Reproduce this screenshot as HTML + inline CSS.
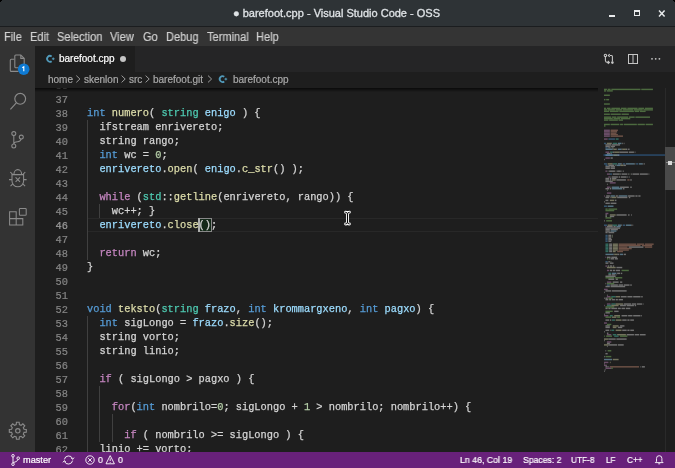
<!DOCTYPE html><html><head><meta charset="utf-8"><style>
*{margin:0;padding:0;box-sizing:border-box}
html,body{width:675px;height:468px;overflow:hidden;background:#1e1e1e}
body{position:relative;font-family:"Liberation Sans",sans-serif}
.t,.code,.ln{will-change:transform}
.t{-webkit-text-stroke:0.2px currentColor}
.a{position:absolute}
.t{position:absolute;white-space:pre;line-height:1}
.code{position:absolute;white-space:pre;font-family:"Liberation Mono",monospace;font-size:10.333px;line-height:14px;height:14px;-webkit-text-stroke:0.25px currentColor}
.ln{position:absolute;white-space:pre;font-family:"Liberation Mono",monospace;font-size:10.333px;line-height:14px;color:#858585;text-align:right;width:40px;-webkit-text-stroke:0.2px currentColor}
svg{position:absolute;overflow:visible}
</style></head><body>

<div class="a" style="left:0;top:0;width:675px;height:26px;background:#2e3336"></div>
<div class="a" style="left:0;top:26px;width:675px;height:1px;background:#1b1d1f"></div>
<div class="a" style="left:0;top:0;width:2px;height:1px;background:#000"></div><div class="a" style="left:0;top:0;width:1px;height:2px;background:#000"></div>
<div class="a" style="left:673px;top:0;width:2px;height:1px;background:#000"></div><div class="a" style="left:674px;top:0;width:1px;height:2px;background:#000"></div>
<div class="t" style="left:233px;top:8px;font-size:11px;color:#dfe3e6;-webkit-text-stroke:0.3px #dfe3e6">● barefoot.cpp - Visual Studio Code - OSS</div>
<div class="a" style="left:608.7px;top:14.6px;width:6.2px;height:2px;background:#e8eaeb"></div>
<div class="a" style="left:633.5px;top:10px;width:6.5px;height:6px;border:1.7px solid #e8eaeb;border-top-width:2.2px"></div>
<svg style="left:657px;top:9px" width="10" height="9" viewBox="0 0 10 9"><path d="M2 1.6 L7.6 7.4 M7.6 1.6 L2 7.4" stroke="#e8eaeb" stroke-width="1.5"/></svg>
<div class="a" style="left:0;top:27px;width:675px;height:19px;background:#343434"></div>
<div class="t" style="left:3.68px;top:30.9px;font-size:12px;color:#d0d0d0;transform:scaleX(0.92);transform-origin:0 0">File</div>
<div class="t" style="left:29.78px;top:30.9px;font-size:12px;color:#d0d0d0;transform:scaleX(0.92);transform-origin:0 0">Edit</div>
<div class="t" style="left:56.54px;top:30.9px;font-size:12px;color:#d0d0d0;transform:scaleX(0.92);transform-origin:0 0">Selection</div>
<div class="t" style="left:110.00px;top:30.9px;font-size:12px;color:#d0d0d0;transform:scaleX(0.92);transform-origin:0 0">View</div>
<div class="t" style="left:142.94px;top:30.9px;font-size:12px;color:#d0d0d0;transform:scaleX(0.92);transform-origin:0 0">Go</div>
<div class="t" style="left:165.88px;top:30.9px;font-size:12px;color:#d0d0d0;transform:scaleX(0.92);transform-origin:0 0">Debug</div>
<div class="t" style="left:206.97px;top:30.9px;font-size:12px;color:#d0d0d0;transform:scaleX(0.92);transform-origin:0 0">Terminal</div>
<div class="t" style="left:255.88px;top:30.9px;font-size:12px;color:#d0d0d0;transform:scaleX(0.92);transform-origin:0 0">Help</div>
<div class="a" style="left:0;top:46px;width:35px;height:406px;background:#333333"></div>
<svg style="left:0;top:0" width="35" height="250"><g fill="none" stroke="#8b8b8b" stroke-width="1.1"><path d="M14.3 59.3 H11.3 Q10.3 59.3 10.3 60.3 V70.4 Q10.3 71.4 11.3 71.4 H18.5"/><path d="M18.5 67.8 H15.8 Q14.8 67.8 14.8 66.8 V56 Q14.8 55 15.8 55 H20.8 L24.2 58.4 V64"/><path d="M20.8 55 V58.4 H24.2"/></g><circle cx="23.7" cy="69.2" r="5.8" fill="#0e7ad3"/><path d="M22.3 67.8 L23.8 66.8 V71.2" stroke="#fff" stroke-width="1.1" fill="none"/><g fill="none" stroke="#8b8b8b" stroke-width="1.15"><circle cx="20.2" cy="98.8" r="5.4"/><path d="M16.3 102.9 L10.4 109.3"/></g><g fill="none" stroke="#8b8b8b" stroke-width="1.05"><circle cx="13.8" cy="133.6" r="2"/><circle cx="21.3" cy="137.1" r="2"/><circle cx="13.8" cy="146" r="2"/><path d="M13.8 135.6 V144 M21 139 Q20.8 141.6 17.5 141.7 Q14 141.8 13.9 144"/></g><g fill="none" stroke="#8b8b8b" stroke-width="1.05"><path d="M13.9 174.6 A3.9 5 0 0 1 21.7 174.6"/><path d="M12 174.6 H23.6 V181 A5.8 5.8 0 0 1 12 181 Z"/><path d="M15.6 177.4 L20 181.8 M20 177.4 L15.6 181.8"/><path d="M10.3 172 L12.4 174.2 M25.3 172 L23.2 174.2 M9 179.6 H12 M26.6 179.6 H23.6 M10.5 186.2 L13 183.6 M25.1 186.2 L22.6 183.6"/></g><g fill="none" stroke="#8b8b8b" stroke-width="1.05"><path d="M9.6 211.8 H16.2 V218.6 H22.8 V224.9 H9.6 Z M9.6 218.6 H16.2 V224.9"/><rect x="19.4" y="208.4" width="6.8" height="6.8" rx="0.8"/></g></svg>
<svg style="left:0;top:0" width="35" height="452"><g fill="none" stroke="#8b8b8b" stroke-width="1.1"><path d="M24.00 429.22 L26.29 429.43 L26.29 432.17 L24.00 432.38 L23.30 434.07 L24.77 435.83 L22.83 437.77 L21.07 436.30 L19.38 437.00 L19.17 439.29 L16.43 439.29 L16.22 437.00 L14.53 436.30 L12.77 437.77 L10.83 435.83 L12.30 434.07 L11.60 432.38 L9.31 432.17 L9.31 429.43 L11.60 429.22 L12.30 427.53 L10.83 425.77 L12.77 423.83 L14.53 425.30 L16.22 424.60 L16.43 422.31 L19.17 422.31 L19.38 424.60 L21.07 425.30 L22.83 423.83 L24.77 425.77 L23.30 427.53 Z"/><circle cx="17.8" cy="430.8" r="2.2"/></g></svg>
<div class="a" style="left:35px;top:46px;width:640px;height:25.5px;background:#252526"></div>
<div class="a" style="left:35px;top:46px;width:100px;height:26px;background:#1e1e1e"></div>
<svg style="left:46px;top:55px" width="10" height="8"><path d="M5.66 1.42 A2.9 2.9 0 1 0 5.66 6.18" fill="none" stroke="#519aba" stroke-width="1.8"/><path d="M5.9 3.8 H8.6 M7.25 2.5 V5.1" stroke="#519aba" stroke-width="1"/></svg>
<div class="t" style="left:59px;top:54px;font-size:10px;color:#ffffff">barefoot.cpp</div>
<div class="a" style="left:120px;top:56px;width:6px;height:6px;border-radius:3px;background:#c5c5c5"></div>
<svg style="left:600px;top:50px" width="75" height="20"><g fill="none" stroke="#c5c5c5" stroke-width="1.1"><circle cx="5.4" cy="5.4" r="1.2"/><path d="M5.4 6.8 V10.6 Q5.4 12.4 7.4 12.4 H9"/><path d="M7.8 11 L9.4 12.4 L7.8 13.8"/><path d="M10 5.5 H11.6 Q12.4 5.5 12.4 6.5 V11.4"/><path d="M9.7 4.1 L8.3 5.5 L9.7 6.9"/></g><circle cx="12.4" cy="12.6" r="1.3" fill="#c5c5c5"/><g fill="none" stroke="#c5c5c5" stroke-width="1"><rect x="28.5" y="4.5" width="9" height="9"/><path d="M33 4.5 V13.5"/></g><g fill="#c5c5c5"><circle cx="52" cy="8.8" r="0.9"/><circle cx="55.7" cy="8.8" r="0.9"/><circle cx="59.4" cy="8.8" r="0.9"/></g></svg>
<div class="a" style="left:35px;top:71.5px;width:640px;height:16.5px;background:#1e1e1e"></div>
<div class="t" style="left:47.8px;top:74.8px;font-size:10px;color:#a9a9a9">home</div>
<div class="t" style="left:83.6px;top:74.8px;font-size:10px;color:#a9a9a9">skenlon</div>
<div class="t" style="left:129.0px;top:74.8px;font-size:10px;color:#a9a9a9">src</div>
<div class="t" style="left:153.2px;top:74.8px;font-size:10px;color:#a9a9a9">barefoot.git</div>
<div class="t" style="left:232.5px;top:74.8px;font-size:10px;color:#a9a9a9">barefoot.cpp</div>
<svg style="left:0;top:0" width="300" height="90"><path d="M76.3 75.6 L79.9 79 L76.3 82.4" fill="none" stroke="#a9a9a9" stroke-width="0.9"/><path d="M121.6 75.6 L125.2 79 L121.6 82.4" fill="none" stroke="#a9a9a9" stroke-width="0.9"/><path d="M145.6 75.6 L149.2 79 L145.6 82.4" fill="none" stroke="#a9a9a9" stroke-width="0.9"/><path d="M208.0 75.6 L211.6 79 L208.0 82.4" fill="none" stroke="#a9a9a9" stroke-width="0.9"/><g transform="translate(218.6,75.3)"><path d="M5.66 1.42 A2.9 2.9 0 1 0 5.66 6.18" fill="none" stroke="#519aba" stroke-width="1.8"/><path d="M5.9 3.8 H8.6 M7.25 2.5 V5.1" stroke="#519aba" stroke-width="1"/></g></svg>
<div class="a" style="left:0;top:88px;width:675px;height:364px;overflow:hidden">
<div class="ln" style="left:28.3px;top:-9.25px;color:#858585">36</div>
<div class="ln" style="left:28.3px;top:4.75px;color:#858585">37</div>
<div class="ln" style="left:28.3px;top:18.75px;color:#858585">38</div>
<div class="ln" style="left:28.3px;top:32.75px;color:#858585">39</div>
<div class="ln" style="left:28.3px;top:46.75px;color:#858585">40</div>
<div class="ln" style="left:28.3px;top:60.75px;color:#858585">41</div>
<div class="ln" style="left:28.3px;top:74.75px;color:#858585">42</div>
<div class="ln" style="left:28.3px;top:88.75px;color:#858585">43</div>
<div class="ln" style="left:28.3px;top:102.75px;color:#858585">44</div>
<div class="ln" style="left:28.3px;top:116.75px;color:#858585">45</div>
<div class="ln" style="left:28.3px;top:130.75px;color:#9a9a9a">46</div>
<div class="ln" style="left:28.3px;top:144.75px;color:#858585">47</div>
<div class="ln" style="left:28.3px;top:158.75px;color:#858585">48</div>
<div class="ln" style="left:28.3px;top:172.75px;color:#858585">49</div>
<div class="ln" style="left:28.3px;top:186.75px;color:#858585">50</div>
<div class="ln" style="left:28.3px;top:200.75px;color:#858585">51</div>
<div class="ln" style="left:28.3px;top:214.75px;color:#858585">52</div>
<div class="ln" style="left:28.3px;top:228.75px;color:#858585">53</div>
<div class="ln" style="left:28.3px;top:242.75px;color:#858585">54</div>
<div class="ln" style="left:28.3px;top:256.75px;color:#858585">55</div>
<div class="ln" style="left:28.3px;top:270.75px;color:#858585">56</div>
<div class="ln" style="left:28.3px;top:284.75px;color:#858585">57</div>
<div class="ln" style="left:28.3px;top:298.75px;color:#858585">58</div>
<div class="ln" style="left:28.3px;top:312.75px;color:#858585">59</div>
<div class="ln" style="left:28.3px;top:326.75px;color:#858585">60</div>
<div class="ln" style="left:28.3px;top:340.75px;color:#858585">61</div>
<div class="ln" style="left:28.3px;top:354.75px;color:#858585">62</div>
<div class="a" style="left:87px;top:130.0px;width:511px;height:14px;border-top:1.4px solid #282828;border-bottom:1.4px solid #282828"></div>
<div class="a" style="left:87.00px;top:32.0px;width:1px;height:140.0px;background:#404040"></div>
<div class="a" style="left:99.40px;top:116.0px;width:1px;height:14.0px;background:#404040"></div>
<div class="a" style="left:87.00px;top:228.0px;width:1px;height:140.0px;background:#404040"></div>
<div class="a" style="left:99.40px;top:298.0px;width:1px;height:56.0px;background:#404040"></div>
<div class="a" style="left:111.80px;top:326.0px;width:1px;height:28.0px;background:#404040"></div>
<div class="a" style="left:198.3px;top:130.1px;width:13.3px;height:13.8px;border:1px solid #888;background:#132818"></div>
<div class="a" style="left:198px;top:130.0px;width:1.5px;height:14px;background:#aeafad"></div>
<div class="code" style="left:87.0px;top:18.45px"><span style="color:#569cd6">int</span><span style="color:#d4d4d4"> </span><span style="color:#dcdcaa">numero</span><span style="color:#d4d4d4">( </span><span style="color:#4ec9b0">string</span><span style="color:#d4d4d4"> </span><span style="color:#9cdcfe">enigo</span><span style="color:#d4d4d4"> ) {</span></div>
<div class="code" style="left:87.0px;top:32.45px"><span style="color:#d4d4d4">  ifstream enrivereto;</span></div>
<div class="code" style="left:87.0px;top:46.45px"><span style="color:#d4d4d4">  string rango;</span></div>
<div class="code" style="left:87.0px;top:60.45px"><span style="color:#d4d4d4">  </span><span style="color:#569cd6">int</span><span style="color:#d4d4d4"> wc = </span><span style="color:#b5cea8">0</span><span style="color:#d4d4d4">;</span></div>
<div class="code" style="left:87.0px;top:74.45px"><span style="color:#d4d4d4">  </span><span style="color:#9cdcfe">enrivereto</span><span style="color:#d4d4d4">.</span><span style="color:#dcdcaa">open</span><span style="color:#d4d4d4">( </span><span style="color:#9cdcfe">enigo</span><span style="color:#d4d4d4">.</span><span style="color:#dcdcaa">c_str</span><span style="color:#d4d4d4">() );</span></div>
<div class="code" style="left:87.0px;top:102.45px"><span style="color:#d4d4d4">  </span><span style="color:#c586c0">while</span><span style="color:#d4d4d4"> (</span><span style="color:#4ec9b0">std</span><span style="color:#d4d4d4">::</span><span style="color:#dcdcaa">getline</span><span style="color:#d4d4d4">(enrivereto, rango)) {</span></div>
<div class="code" style="left:87.0px;top:116.45px"><span style="color:#d4d4d4">    wc++; }</span></div>
<div class="code" style="left:87.0px;top:130.45px"><span style="color:#d4d4d4">  </span><span style="color:#9cdcfe">enrivereto</span><span style="color:#d4d4d4">.</span><span style="color:#dcdcaa">close</span><span style="color:#d4d4d4">();</span></div>
<div class="code" style="left:87.0px;top:158.45px"><span style="color:#d4d4d4">  </span><span style="color:#c586c0">return</span><span style="color:#d4d4d4"> wc;</span></div>
<div class="code" style="left:87.0px;top:172.45px"><span style="color:#d4d4d4">}</span></div>
<div class="code" style="left:87.0px;top:214.45px"><span style="color:#569cd6">void</span><span style="color:#d4d4d4"> </span><span style="color:#dcdcaa">teksto</span><span style="color:#d4d4d4">(</span><span style="color:#4ec9b0">string</span><span style="color:#d4d4d4"> </span><span style="color:#9cdcfe">frazo</span><span style="color:#d4d4d4">, </span><span style="color:#569cd6">int</span><span style="color:#d4d4d4"> </span><span style="color:#9cdcfe">krommargxeno</span><span style="color:#d4d4d4">, </span><span style="color:#569cd6">int</span><span style="color:#d4d4d4"> </span><span style="color:#9cdcfe">pagxo</span><span style="color:#d4d4d4">) {</span></div>
<div class="code" style="left:87.0px;top:228.45px"><span style="color:#d4d4d4">  </span><span style="color:#569cd6">int</span><span style="color:#d4d4d4"> sigLongo = </span><span style="color:#9cdcfe">frazo</span><span style="color:#d4d4d4">.</span><span style="color:#dcdcaa">size</span><span style="color:#d4d4d4">();</span></div>
<div class="code" style="left:87.0px;top:242.45px"><span style="color:#d4d4d4">  string vorto;</span></div>
<div class="code" style="left:87.0px;top:256.45px"><span style="color:#d4d4d4">  string linio;</span></div>
<div class="code" style="left:87.0px;top:284.45px"><span style="color:#d4d4d4">  </span><span style="color:#c586c0">if</span><span style="color:#d4d4d4"> ( sigLongo &gt; pagxo ) {</span></div>
<div class="code" style="left:87.0px;top:312.45px"><span style="color:#d4d4d4">    </span><span style="color:#c586c0">for</span><span style="color:#d4d4d4">(</span><span style="color:#569cd6">int</span><span style="color:#d4d4d4"> nombrilo=</span><span style="color:#b5cea8">0</span><span style="color:#d4d4d4">; sigLongo + </span><span style="color:#b5cea8">1</span><span style="color:#d4d4d4"> &gt; nombrilo; nombrilo++) {</span></div>
<div class="code" style="left:87.0px;top:340.45px"><span style="color:#d4d4d4">      </span><span style="color:#c586c0">if</span><span style="color:#d4d4d4"> ( nombrilo &gt;= sigLongo ) {</span></div>
<div class="code" style="left:87.0px;top:354.45px"><span style="color:#d4d4d4">  linio += vorto;</span></div>
<svg style="left:0;top:0" width="675" height="364"><rect x="603.5" y="66.50" width="61.5" height="1.1" fill="#2f5a85"/><g opacity="0.45"><rect x="604.00" y="41.58" width="5.84" height="1.45" fill="#c586c0"/><rect x="610.57" y="41.58" width="7.30" height="1.45" fill="#ce9178"/><rect x="604.00" y="43.04" width="5.84" height="1.45" fill="#c586c0"/><rect x="610.57" y="43.04" width="6.57" height="1.45" fill="#ce9178"/><rect x="604.00" y="44.50" width="5.84" height="1.45" fill="#c586c0"/><rect x="610.57" y="44.50" width="5.84" height="1.45" fill="#ce9178"/><rect x="604.00" y="45.96" width="5.84" height="1.45" fill="#c586c0"/><rect x="610.57" y="45.96" width="7.30" height="1.45" fill="#ce9178"/><rect x="604.00" y="47.42" width="5.84" height="1.45" fill="#c586c0"/><rect x="610.57" y="47.42" width="12.41" height="1.45" fill="#ce9178"/><rect x="604.00" y="50.34" width="3.65" height="1.45" fill="#c586c0"/><rect x="608.38" y="50.34" width="6.57" height="1.45" fill="#569cd6"/><rect x="615.68" y="50.34" width="2.92" height="1.45" fill="#4ec9b0"/><rect x="605.46" y="91.22" width="3.65" height="1.45" fill="#d4d4d4"/><rect x="609.84" y="91.22" width="1.46" height="1.45" fill="#d4d4d4"/><rect x="612.03" y="91.22" width="3.65" height="1.45" fill="#dcdcaa"/><rect x="616.41" y="91.22" width="9.49" height="1.45" fill="#d4d4d4"/><rect x="627.36" y="91.22" width="2.19" height="1.45" fill="#ce9178"/><rect x="630.28" y="91.22" width="1.46" height="1.45" fill="#d4d4d4"/><rect x="605.46" y="92.68" width="7.30" height="1.45" fill="#d4d4d4"/><rect x="609.84" y="94.14" width="5.84" height="1.45" fill="#c586c0"/><rect x="606.92" y="95.60" width="0.73" height="1.45" fill="#d4d4d4"/><rect x="606.92" y="98.52" width="2.92" height="1.45" fill="#c586c0"/><rect x="610.57" y="98.52" width="0.73" height="1.45" fill="#d4d4d4"/><rect x="612.03" y="98.52" width="7.30" height="1.45" fill="#9cdcfe"/><rect x="620.06" y="98.52" width="8.76" height="1.45" fill="#d4d4d4"/><rect x="630.28" y="98.52" width="1.46" height="1.45" fill="#d4d4d4"/><rect x="605.46" y="99.98" width="3.65" height="1.45" fill="#d4d4d4"/><rect x="609.84" y="99.98" width="1.46" height="1.45" fill="#d4d4d4"/><rect x="612.03" y="99.98" width="10.22" height="1.45" fill="#9cdcfe"/><rect x="622.98" y="99.98" width="1.46" height="1.45" fill="#d4d4d4"/><rect x="606.92" y="101.44" width="0.73" height="1.45" fill="#d4d4d4"/><rect x="606.92" y="104.36" width="4.38" height="1.45" fill="#c586c0"/><rect x="604.00" y="107.28" width="0.73" height="1.45" fill="#c586c0"/><rect x="606.19" y="107.28" width="3.65" height="1.45" fill="#d4d4d4"/><rect x="610.57" y="107.28" width="4.38" height="1.45" fill="#9cdcfe"/><rect x="615.68" y="107.28" width="2.19" height="1.45" fill="#d4d4d4"/><rect x="618.60" y="107.28" width="8.76" height="1.45" fill="#9cdcfe"/><rect x="628.09" y="107.28" width="6.57" height="1.45" fill="#d4d4d4"/><rect x="635.39" y="107.28" width="2.19" height="1.45" fill="#d4d4d4"/><rect x="638.31" y="107.28" width="2.19" height="1.45" fill="#d4d4d4"/><rect x="605.46" y="108.74" width="3.65" height="1.45" fill="#d4d4d4"/><rect x="609.84" y="108.74" width="0.73" height="1.45" fill="#d4d4d4"/><rect x="611.30" y="108.74" width="5.11" height="1.45" fill="#dcdcaa"/><rect x="617.14" y="108.74" width="10.22" height="1.45" fill="#d4d4d4"/><rect x="628.82" y="108.74" width="1.46" height="1.45" fill="#d4d4d4"/><rect x="605.46" y="111.66" width="2.92" height="1.45" fill="#d4d4d4"/><rect x="609.84" y="111.66" width="4.38" height="1.45" fill="#dcdcaa"/><rect x="614.95" y="111.66" width="1.46" height="1.45" fill="#d4d4d4"/><rect x="604.00" y="113.12" width="0.73" height="1.45" fill="#d4d4d4"/><rect x="605.46" y="114.58" width="4.38" height="1.45" fill="#d4d4d4"/><rect x="610.57" y="114.58" width="5.84" height="1.45" fill="#d4d4d4"/><rect x="604.00" y="117.50" width="2.92" height="1.45" fill="#569cd6"/><rect x="607.65" y="117.50" width="5.84" height="1.45" fill="#9cdcfe"/><rect x="605.46" y="124.80" width="2.92" height="1.45" fill="#c586c0"/><rect x="605.46" y="126.26" width="1.46" height="1.45" fill="#d4d4d4"/><rect x="609.84" y="126.26" width="5.84" height="1.45" fill="#dcdcaa"/><rect x="616.41" y="126.26" width="10.22" height="1.45" fill="#d4d4d4"/><rect x="628.09" y="126.26" width="1.46" height="1.45" fill="#d4d4d4"/><rect x="631.01" y="126.26" width="0.73" height="1.45" fill="#d4d4d4"/><rect x="605.46" y="127.72" width="1.46" height="1.45" fill="#d4d4d4"/><rect x="609.84" y="127.72" width="4.38" height="1.45" fill="#d4d4d4"/><rect x="604.00" y="132.10" width="0.73" height="1.45" fill="#d4d4d4"/><rect x="604.00" y="136.48" width="2.92" height="1.45" fill="#569cd6"/><rect x="607.65" y="136.48" width="4.38" height="1.45" fill="#dcdcaa"/><rect x="612.03" y="136.48" width="0.73" height="1.45" fill="#d4d4d4"/><rect x="612.76" y="136.48" width="4.38" height="1.45" fill="#4ec9b0"/><rect x="617.87" y="136.48" width="3.65" height="1.45" fill="#9cdcfe"/><rect x="621.52" y="136.48" width="0.73" height="1.45" fill="#d4d4d4"/><rect x="622.98" y="136.48" width="2.19" height="1.45" fill="#569cd6"/><rect x="625.90" y="136.48" width="5.11" height="1.45" fill="#9cdcfe"/><rect x="631.01" y="136.48" width="0.73" height="1.45" fill="#d4d4d4"/><rect x="632.47" y="136.48" width="0.73" height="1.45" fill="#d4d4d4"/><rect x="605.46" y="137.94" width="0.73" height="1.45" fill="#c586c0"/><rect x="606.92" y="137.94" width="5.84" height="1.45" fill="#d4d4d4"/><rect x="613.49" y="137.94" width="2.19" height="1.45" fill="#d4d4d4"/><rect x="616.41" y="137.94" width="4.38" height="1.45" fill="#9cdcfe"/><rect x="605.46" y="139.40" width="14.60" height="1.45" fill="#d4d4d4"/><rect x="605.46" y="140.86" width="4.38" height="1.45" fill="#d4d4d4"/><rect x="610.57" y="140.86" width="7.30" height="1.45" fill="#d4d4d4"/><rect x="605.46" y="142.32" width="4.38" height="1.45" fill="#d4d4d4"/><rect x="610.57" y="142.32" width="5.84" height="1.45" fill="#9cdcfe"/><rect x="605.46" y="143.78" width="2.19" height="1.45" fill="#d4d4d4"/><rect x="608.38" y="143.78" width="5.84" height="1.45" fill="#d4d4d4"/><rect x="605.46" y="146.70" width="2.19" height="1.45" fill="#569cd6"/><rect x="608.38" y="146.70" width="2.92" height="1.45" fill="#d4d4d4"/><rect x="612.03" y="146.70" width="0.73" height="1.45" fill="#b5cea8"/><rect x="605.46" y="148.16" width="2.19" height="1.45" fill="#569cd6"/><rect x="608.38" y="148.16" width="2.92" height="1.45" fill="#d4d4d4"/><rect x="612.03" y="148.16" width="0.73" height="1.45" fill="#b5cea8"/><rect x="605.46" y="149.62" width="2.19" height="1.45" fill="#569cd6"/><rect x="608.38" y="149.62" width="2.92" height="1.45" fill="#d4d4d4"/><rect x="605.46" y="151.08" width="2.19" height="1.45" fill="#569cd6"/><rect x="608.38" y="151.08" width="3.65" height="1.45" fill="#d4d4d4"/><rect x="605.46" y="152.54" width="2.19" height="1.45" fill="#569cd6"/><rect x="608.38" y="152.54" width="2.92" height="1.45" fill="#d4d4d4"/><rect x="605.46" y="155.46" width="2.92" height="1.45" fill="#4ec9b0"/><rect x="609.11" y="155.46" width="2.92" height="1.45" fill="#d4d4d4"/><rect x="612.76" y="155.46" width="5.11" height="1.45" fill="#dcdcaa"/><rect x="618.60" y="155.46" width="17.52" height="1.45" fill="#ce9178"/><rect x="636.85" y="155.46" width="7.30" height="1.45" fill="#ce9178"/><rect x="644.88" y="155.46" width="8.76" height="1.45" fill="#ce9178"/><rect x="605.46" y="156.92" width="2.92" height="1.45" fill="#4ec9b0"/><rect x="609.11" y="156.92" width="2.92" height="1.45" fill="#d4d4d4"/><rect x="612.76" y="156.92" width="5.11" height="1.45" fill="#dcdcaa"/><rect x="618.60" y="156.92" width="21.90" height="1.45" fill="#ce9178"/><rect x="641.96" y="156.92" width="10.22" height="1.45" fill="#ce9178"/><rect x="605.46" y="158.38" width="2.92" height="1.45" fill="#4ec9b0"/><rect x="609.11" y="158.38" width="2.92" height="1.45" fill="#d4d4d4"/><rect x="612.76" y="158.38" width="5.11" height="1.45" fill="#dcdcaa"/><rect x="618.60" y="158.38" width="8.76" height="1.45" fill="#ce9178"/><rect x="628.82" y="158.38" width="14.60" height="1.45" fill="#d4d4d4"/><rect x="644.88" y="158.38" width="7.30" height="1.45" fill="#ce9178"/><rect x="605.46" y="159.84" width="2.92" height="1.45" fill="#4ec9b0"/><rect x="609.11" y="159.84" width="2.92" height="1.45" fill="#d4d4d4"/><rect x="612.76" y="159.84" width="5.11" height="1.45" fill="#dcdcaa"/><rect x="618.60" y="159.84" width="13.14" height="1.45" fill="#ce9178"/><rect x="605.46" y="161.30" width="2.92" height="1.45" fill="#4ec9b0"/><rect x="609.11" y="161.30" width="2.92" height="1.45" fill="#d4d4d4"/><rect x="612.76" y="161.30" width="5.11" height="1.45" fill="#dcdcaa"/><rect x="618.60" y="161.30" width="10.22" height="1.45" fill="#ce9178"/><rect x="605.46" y="162.76" width="2.92" height="1.45" fill="#4ec9b0"/><rect x="609.11" y="162.76" width="2.92" height="1.45" fill="#d4d4d4"/><rect x="612.76" y="162.76" width="2.92" height="1.45" fill="#dcdcaa"/><rect x="617.14" y="162.76" width="5.84" height="1.45" fill="#ce9178"/><rect x="605.46" y="165.68" width="8.03" height="1.45" fill="#9cdcfe"/><rect x="613.49" y="165.68" width="0.73" height="1.45" fill="#d4d4d4"/><rect x="614.22" y="165.68" width="2.92" height="1.45" fill="#dcdcaa"/><rect x="617.14" y="165.68" width="2.19" height="1.45" fill="#d4d4d4"/><rect x="620.06" y="165.68" width="2.92" height="1.45" fill="#9cdcfe"/><rect x="623.71" y="165.68" width="2.19" height="1.45" fill="#d4d4d4"/><rect x="605.46" y="168.60" width="0.73" height="1.45" fill="#c586c0"/><rect x="606.92" y="168.60" width="3.65" height="1.45" fill="#d4d4d4"/><rect x="611.30" y="168.60" width="5.84" height="1.45" fill="#d4d4d4"/><rect x="609.11" y="170.06" width="0.73" height="1.45" fill="#b5cea8"/><rect x="610.57" y="170.06" width="3.65" height="1.45" fill="#d4d4d4"/><rect x="614.95" y="170.06" width="2.92" height="1.45" fill="#d4d4d4"/><rect x="605.46" y="172.98" width="2.19" height="1.45" fill="#569cd6"/><rect x="608.38" y="172.98" width="1.46" height="1.45" fill="#d4d4d4"/><rect x="610.57" y="172.98" width="0.73" height="1.45" fill="#b5cea8"/><rect x="605.46" y="174.44" width="2.92" height="1.45" fill="#d4d4d4"/><rect x="609.84" y="174.44" width="3.65" height="1.45" fill="#d4d4d4"/><rect x="605.46" y="177.36" width="1.46" height="1.45" fill="#c586c0"/><rect x="607.65" y="177.36" width="1.46" height="1.45" fill="#d4d4d4"/><rect x="609.84" y="177.36" width="2.19" height="1.45" fill="#d4d4d4"/><rect x="612.76" y="177.36" width="1.46" height="1.45" fill="#d4d4d4"/><rect x="606.92" y="178.82" width="8.76" height="1.45" fill="#dcdcaa"/><rect x="616.41" y="178.82" width="5.84" height="1.45" fill="#d4d4d4"/><rect x="606.92" y="181.74" width="2.19" height="1.45" fill="#c586c0"/><rect x="609.84" y="181.74" width="2.19" height="1.45" fill="#d4d4d4"/><rect x="612.76" y="181.74" width="2.19" height="1.45" fill="#d4d4d4"/><rect x="615.68" y="181.74" width="4.38" height="1.45" fill="#d4d4d4"/><rect x="608.38" y="184.66" width="2.92" height="1.45" fill="#4ec9b0"/><rect x="612.03" y="184.66" width="4.38" height="1.45" fill="#9cdcfe"/><rect x="617.14" y="184.66" width="2.92" height="1.45" fill="#d4d4d4"/><rect x="620.79" y="184.66" width="1.46" height="1.45" fill="#d4d4d4"/><rect x="608.38" y="186.12" width="2.92" height="1.45" fill="#d4d4d4"/><rect x="612.03" y="186.12" width="2.92" height="1.45" fill="#d4d4d4"/><rect x="615.68" y="186.12" width="0.73" height="1.45" fill="#d4d4d4"/><rect x="605.46" y="187.58" width="10.22" height="1.45" fill="#d4d4d4"/><rect x="608.38" y="190.50" width="5.84" height="1.45" fill="#d4d4d4"/><rect x="615.68" y="190.50" width="2.19" height="1.45" fill="#d4d4d4"/><rect x="606.92" y="193.42" width="4.38" height="1.45" fill="#c586c0"/><rect x="612.76" y="193.42" width="5.84" height="1.45" fill="#d4d4d4"/><rect x="620.06" y="193.42" width="2.19" height="1.45" fill="#d4d4d4"/><rect x="605.46" y="194.88" width="0.73" height="1.45" fill="#d4d4d4"/><rect x="606.92" y="196.34" width="2.92" height="1.45" fill="#569cd6"/><rect x="610.57" y="196.34" width="7.30" height="1.45" fill="#d4d4d4"/><rect x="618.60" y="196.34" width="4.38" height="1.45" fill="#d4d4d4"/><rect x="623.71" y="196.34" width="5.84" height="1.45" fill="#d4d4d4"/><rect x="630.28" y="196.34" width="1.46" height="1.45" fill="#d4d4d4"/><rect x="605.46" y="197.80" width="4.38" height="1.45" fill="#d4d4d4"/><rect x="610.57" y="197.80" width="14.60" height="1.45" fill="#d4d4d4"/><rect x="604.00" y="200.72" width="3.65" height="1.45" fill="#c586c0"/><rect x="605.46" y="202.18" width="5.84" height="1.45" fill="#d4d4d4"/><rect x="612.03" y="202.18" width="14.60" height="1.45" fill="#d4d4d4"/><rect x="604.00" y="203.64" width="0.73" height="1.45" fill="#d4d4d4"/><rect x="606.92" y="206.56" width="0.73" height="1.45" fill="#d4d4d4"/><rect x="606.92" y="208.02" width="3.65" height="1.45" fill="#c586c0"/><rect x="611.30" y="208.02" width="4.38" height="1.45" fill="#4ec9b0"/><rect x="615.68" y="208.02" width="4.38" height="1.45" fill="#dcdcaa"/><rect x="620.79" y="208.02" width="5.84" height="1.45" fill="#d4d4d4"/><rect x="627.36" y="208.02" width="5.11" height="1.45" fill="#d4d4d4"/><rect x="633.20" y="208.02" width="7.30" height="1.45" fill="#d4d4d4"/><rect x="641.23" y="208.02" width="1.46" height="1.45" fill="#d4d4d4"/><rect x="604.00" y="209.48" width="0.73" height="1.45" fill="#d4d4d4"/><rect x="605.46" y="209.48" width="2.19" height="1.45" fill="#d4d4d4"/><rect x="605.46" y="210.94" width="2.92" height="1.45" fill="#d4d4d4"/><rect x="609.11" y="210.94" width="2.19" height="1.45" fill="#d4d4d4"/><rect x="612.03" y="210.94" width="2.92" height="1.45" fill="#d4d4d4"/><rect x="615.68" y="210.94" width="2.19" height="1.45" fill="#d4d4d4"/><rect x="618.60" y="210.94" width="4.38" height="1.45" fill="#d4d4d4"/><rect x="606.92" y="215.32" width="3.65" height="1.45" fill="#c586c0"/><rect x="611.30" y="215.32" width="4.38" height="1.45" fill="#4ec9b0"/><rect x="615.68" y="215.32" width="7.30" height="1.45" fill="#dcdcaa"/><rect x="623.71" y="215.32" width="7.30" height="1.45" fill="#d4d4d4"/><rect x="631.74" y="215.32" width="4.38" height="1.45" fill="#d4d4d4"/><rect x="636.85" y="215.32" width="5.11" height="1.45" fill="#d4d4d4"/><rect x="642.69" y="215.32" width="0.73" height="1.45" fill="#d4d4d4"/><rect x="604.00" y="216.78" width="0.73" height="1.45" fill="#c586c0"/><rect x="606.92" y="216.78" width="4.38" height="1.45" fill="#4ec9b0"/><rect x="611.30" y="216.78" width="7.30" height="1.45" fill="#dcdcaa"/><rect x="620.06" y="216.78" width="5.84" height="1.45" fill="#d4d4d4"/><rect x="626.63" y="216.78" width="7.30" height="1.45" fill="#d4d4d4"/><rect x="634.66" y="216.78" width="1.46" height="1.45" fill="#d4d4d4"/><rect x="605.46" y="219.70" width="2.19" height="1.45" fill="#d4d4d4"/><rect x="608.38" y="219.70" width="2.19" height="1.45" fill="#d4d4d4"/><rect x="611.30" y="219.70" width="5.84" height="1.45" fill="#d4d4d4"/><rect x="617.87" y="219.70" width="2.92" height="1.45" fill="#d4d4d4"/><rect x="621.52" y="219.70" width="3.65" height="1.45" fill="#d4d4d4"/><rect x="625.90" y="219.70" width="4.38" height="1.45" fill="#d4d4d4"/><rect x="614.22" y="222.62" width="4.38" height="1.45" fill="#d4d4d4"/><rect x="605.46" y="224.08" width="4.38" height="1.45" fill="#d4d4d4"/><rect x="604.00" y="225.54" width="0.73" height="1.45" fill="#d4d4d4"/><rect x="604.00" y="227.00" width="4.38" height="1.45" fill="#c586c0"/><rect x="609.84" y="227.00" width="2.92" height="1.45" fill="#4ec9b0"/><rect x="614.22" y="227.00" width="5.84" height="1.45" fill="#dcdcaa"/><rect x="621.52" y="227.00" width="5.84" height="1.45" fill="#d4d4d4"/><rect x="628.09" y="227.00" width="4.38" height="1.45" fill="#d4d4d4"/><rect x="633.20" y="227.00" width="7.30" height="1.45" fill="#d4d4d4"/><rect x="641.23" y="227.00" width="0.73" height="1.45" fill="#d4d4d4"/><rect x="612.03" y="228.46" width="4.38" height="1.45" fill="#dcdcaa"/><rect x="605.46" y="231.38" width="3.65" height="1.45" fill="#d4d4d4"/><rect x="609.84" y="231.38" width="1.46" height="1.45" fill="#d4d4d4"/><rect x="612.03" y="231.38" width="2.92" height="1.45" fill="#4ec9b0"/><rect x="615.68" y="231.38" width="5.84" height="1.45" fill="#dcdcaa"/><rect x="622.25" y="231.38" width="4.38" height="1.45" fill="#d4d4d4"/><rect x="627.36" y="231.38" width="2.19" height="1.45" fill="#d4d4d4"/><rect x="630.28" y="231.38" width="3.65" height="1.45" fill="#d4d4d4"/><rect x="604.00" y="234.30" width="2.92" height="1.45" fill="#c586c0"/><rect x="605.46" y="237.22" width="4.38" height="1.45" fill="#d4d4d4"/><rect x="612.76" y="237.22" width="5.84" height="1.45" fill="#dcdcaa"/><rect x="620.06" y="237.22" width="4.38" height="1.45" fill="#d4d4d4"/><rect x="605.46" y="238.68" width="4.38" height="1.45" fill="#d4d4d4"/><rect x="612.76" y="238.68" width="3.65" height="1.45" fill="#dcdcaa"/><rect x="617.87" y="238.68" width="4.38" height="1.45" fill="#d4d4d4"/><rect x="605.46" y="241.60" width="3.65" height="1.45" fill="#d4d4d4"/><rect x="609.84" y="241.60" width="0.73" height="1.45" fill="#d4d4d4"/><rect x="611.30" y="241.60" width="2.92" height="1.45" fill="#4ec9b0"/><rect x="615.68" y="241.60" width="5.84" height="1.45" fill="#dcdcaa"/><rect x="622.25" y="241.60" width="4.38" height="1.45" fill="#d4d4d4"/><rect x="627.36" y="241.60" width="2.19" height="1.45" fill="#d4d4d4"/><rect x="630.28" y="241.60" width="3.65" height="1.45" fill="#d4d4d4"/><rect x="604.00" y="243.06" width="0.73" height="1.45" fill="#d4d4d4"/><rect x="606.92" y="244.52" width="1.46" height="1.45" fill="#d4d4d4"/><rect x="606.92" y="245.98" width="4.38" height="1.45" fill="#c586c0"/><rect x="612.76" y="245.98" width="3.65" height="1.45" fill="#4ec9b0"/><rect x="617.14" y="245.98" width="8.76" height="1.45" fill="#dcdcaa"/><rect x="626.63" y="245.98" width="7.30" height="1.45" fill="#d4d4d4"/><rect x="634.66" y="245.98" width="4.38" height="1.45" fill="#d4d4d4"/><rect x="639.77" y="245.98" width="5.84" height="1.45" fill="#d4d4d4"/><rect x="614.22" y="247.44" width="4.38" height="1.45" fill="#4ec9b0"/><rect x="604.00" y="250.36" width="4.38" height="1.45" fill="#dcdcaa"/><rect x="608.38" y="250.36" width="7.30" height="1.45" fill="#d4d4d4"/><rect x="616.41" y="250.36" width="10.22" height="1.45" fill="#d4d4d4"/><rect x="604.00" y="251.82" width="0.73" height="1.45" fill="#d4d4d4"/><rect x="606.92" y="253.28" width="4.38" height="1.45" fill="#c586c0"/><rect x="606.92" y="254.74" width="2.92" height="1.45" fill="#d4d4d4"/><rect x="604.00" y="256.20" width="4.38" height="1.45" fill="#dcdcaa"/><rect x="608.38" y="256.20" width="8.76" height="1.45" fill="#d4d4d4"/><rect x="617.87" y="256.20" width="5.84" height="1.45" fill="#d4d4d4"/><rect x="606.92" y="257.66" width="0.73" height="1.45" fill="#d4d4d4"/><rect x="605.46" y="262.04" width="0.73" height="1.45" fill="#d4d4d4"/><rect x="605.46" y="264.96" width="2.19" height="1.45" fill="#d4d4d4"/><rect x="604.00" y="267.88" width="0.73" height="1.45" fill="#d4d4d4"/><rect x="604.00" y="270.80" width="8.03" height="1.45" fill="#9cdcfe"/><rect x="612.76" y="270.80" width="5.84" height="1.45" fill="#dcdcaa"/><rect x="604.00" y="273.72" width="4.38" height="1.45" fill="#c586c0"/><rect x="609.84" y="273.72" width="0.73" height="1.45" fill="#dcdcaa"/><rect x="604.00" y="275.18" width="0.73" height="1.45" fill="#d4d4d4"/><rect x="604.00" y="276.64" width="2.92" height="1.45" fill="#c586c0"/><rect x="605.46" y="278.10" width="2.19" height="1.45" fill="#d4d4d4"/><rect x="608.38" y="278.10" width="0.73" height="1.45" fill="#d4d4d4"/><rect x="609.84" y="278.10" width="29.20" height="1.45" fill="#ce9178"/><rect x="640.50" y="278.10" width="0.73" height="1.45" fill="#d4d4d4"/><rect x="641.96" y="278.10" width="2.92" height="1.45" fill="#d4d4d4"/><rect x="605.46" y="279.56" width="5.84" height="1.45" fill="#c586c0"/><rect x="604.73" y="281.02" width="0.73" height="1.45" fill="#d4d4d4"/><rect x="604.00" y="282.48" width="0.73" height="1.45" fill="#d4d4d4"/><rect x="604.00" y="54.72" width="2.19" height="1.45" fill="#569cd6"/><rect x="606.92" y="54.72" width="4.38" height="1.45" fill="#dcdcaa"/><rect x="611.30" y="54.72" width="0.73" height="1.45" fill="#d4d4d4"/><rect x="612.76" y="54.72" width="4.38" height="1.45" fill="#4ec9b0"/><rect x="617.87" y="54.72" width="3.65" height="1.45" fill="#9cdcfe"/><rect x="622.25" y="54.72" width="0.73" height="1.45" fill="#d4d4d4"/><rect x="623.71" y="54.72" width="0.73" height="1.45" fill="#d4d4d4"/><rect x="605.46" y="56.18" width="5.84" height="1.45" fill="#d4d4d4"/><rect x="612.03" y="56.18" width="8.03" height="1.45" fill="#d4d4d4"/><rect x="605.46" y="57.64" width="4.38" height="1.45" fill="#d4d4d4"/><rect x="610.57" y="57.64" width="4.38" height="1.45" fill="#d4d4d4"/><rect x="605.46" y="59.10" width="2.19" height="1.45" fill="#569cd6"/><rect x="608.38" y="59.10" width="1.46" height="1.45" fill="#d4d4d4"/><rect x="610.57" y="59.10" width="0.73" height="1.45" fill="#d4d4d4"/><rect x="612.03" y="59.10" width="0.73" height="1.45" fill="#b5cea8"/><rect x="612.76" y="59.10" width="0.73" height="1.45" fill="#d4d4d4"/><rect x="605.46" y="60.56" width="7.30" height="1.45" fill="#9cdcfe"/><rect x="612.76" y="60.56" width="0.73" height="1.45" fill="#d4d4d4"/><rect x="613.49" y="60.56" width="2.92" height="1.45" fill="#dcdcaa"/><rect x="616.41" y="60.56" width="0.73" height="1.45" fill="#d4d4d4"/><rect x="617.87" y="60.56" width="3.65" height="1.45" fill="#9cdcfe"/><rect x="621.52" y="60.56" width="0.73" height="1.45" fill="#d4d4d4"/><rect x="622.25" y="60.56" width="3.65" height="1.45" fill="#dcdcaa"/><rect x="625.90" y="60.56" width="1.46" height="1.45" fill="#d4d4d4"/><rect x="628.09" y="60.56" width="1.46" height="1.45" fill="#d4d4d4"/><rect x="605.46" y="63.48" width="3.65" height="1.45" fill="#c586c0"/><rect x="609.84" y="63.48" width="0.73" height="1.45" fill="#d4d4d4"/><rect x="610.57" y="63.48" width="2.19" height="1.45" fill="#4ec9b0"/><rect x="612.76" y="63.48" width="1.46" height="1.45" fill="#d4d4d4"/><rect x="614.22" y="63.48" width="5.11" height="1.45" fill="#dcdcaa"/><rect x="619.33" y="63.48" width="8.76" height="1.45" fill="#d4d4d4"/><rect x="628.82" y="63.48" width="5.11" height="1.45" fill="#d4d4d4"/><rect x="634.66" y="63.48" width="0.73" height="1.45" fill="#d4d4d4"/><rect x="606.92" y="64.94" width="3.65" height="1.45" fill="#d4d4d4"/><rect x="611.30" y="64.94" width="0.73" height="1.45" fill="#d4d4d4"/><rect x="605.46" y="66.40" width="7.30" height="1.45" fill="#9cdcfe"/><rect x="612.76" y="66.40" width="0.73" height="1.45" fill="#d4d4d4"/><rect x="613.49" y="66.40" width="3.65" height="1.45" fill="#dcdcaa"/><rect x="617.14" y="66.40" width="2.19" height="1.45" fill="#d4d4d4"/><rect x="605.46" y="69.32" width="4.38" height="1.45" fill="#c586c0"/><rect x="610.57" y="69.32" width="2.19" height="1.45" fill="#d4d4d4"/><rect x="604.00" y="70.78" width="0.73" height="1.45" fill="#d4d4d4"/><rect x="604.00" y="75.16" width="2.92" height="1.45" fill="#569cd6"/><rect x="607.65" y="75.16" width="4.38" height="1.45" fill="#dcdcaa"/><rect x="612.03" y="75.16" width="0.73" height="1.45" fill="#d4d4d4"/><rect x="612.76" y="75.16" width="4.38" height="1.45" fill="#4ec9b0"/><rect x="617.87" y="75.16" width="3.65" height="1.45" fill="#9cdcfe"/><rect x="621.52" y="75.16" width="0.73" height="1.45" fill="#d4d4d4"/><rect x="622.98" y="75.16" width="2.19" height="1.45" fill="#569cd6"/><rect x="625.90" y="75.16" width="8.76" height="1.45" fill="#9cdcfe"/><rect x="634.66" y="75.16" width="0.73" height="1.45" fill="#d4d4d4"/><rect x="636.12" y="75.16" width="2.19" height="1.45" fill="#569cd6"/><rect x="639.04" y="75.16" width="3.65" height="1.45" fill="#9cdcfe"/><rect x="642.69" y="75.16" width="0.73" height="1.45" fill="#d4d4d4"/><rect x="644.15" y="75.16" width="0.73" height="1.45" fill="#d4d4d4"/><rect x="605.46" y="76.62" width="2.19" height="1.45" fill="#569cd6"/><rect x="608.38" y="76.62" width="5.84" height="1.45" fill="#d4d4d4"/><rect x="614.95" y="76.62" width="0.73" height="1.45" fill="#d4d4d4"/><rect x="616.41" y="76.62" width="3.65" height="1.45" fill="#9cdcfe"/><rect x="620.06" y="76.62" width="0.73" height="1.45" fill="#d4d4d4"/><rect x="620.79" y="76.62" width="2.92" height="1.45" fill="#dcdcaa"/><rect x="623.71" y="76.62" width="2.19" height="1.45" fill="#d4d4d4"/><rect x="605.46" y="78.08" width="4.38" height="1.45" fill="#d4d4d4"/><rect x="610.57" y="78.08" width="4.38" height="1.45" fill="#d4d4d4"/><rect x="605.46" y="79.54" width="4.38" height="1.45" fill="#d4d4d4"/><rect x="610.57" y="79.54" width="4.38" height="1.45" fill="#d4d4d4"/><rect x="605.46" y="82.46" width="1.46" height="1.45" fill="#c586c0"/><rect x="607.65" y="82.46" width="0.73" height="1.45" fill="#d4d4d4"/><rect x="609.11" y="82.46" width="5.84" height="1.45" fill="#d4d4d4"/><rect x="615.68" y="82.46" width="0.73" height="1.45" fill="#d4d4d4"/><rect x="617.14" y="82.46" width="3.65" height="1.45" fill="#d4d4d4"/><rect x="621.52" y="82.46" width="0.73" height="1.45" fill="#d4d4d4"/><rect x="622.98" y="82.46" width="0.73" height="1.45" fill="#d4d4d4"/><rect x="606.92" y="85.38" width="2.19" height="1.45" fill="#c586c0"/><rect x="609.11" y="85.38" width="0.73" height="1.45" fill="#d4d4d4"/><rect x="609.84" y="85.38" width="2.19" height="1.45" fill="#569cd6"/><rect x="612.76" y="85.38" width="6.57" height="1.45" fill="#d4d4d4"/><rect x="619.33" y="85.38" width="0.73" height="1.45" fill="#b5cea8"/><rect x="620.06" y="85.38" width="0.73" height="1.45" fill="#d4d4d4"/><rect x="621.52" y="85.38" width="5.84" height="1.45" fill="#d4d4d4"/><rect x="628.09" y="85.38" width="0.73" height="1.45" fill="#d4d4d4"/><rect x="629.55" y="85.38" width="0.73" height="1.45" fill="#b5cea8"/><rect x="631.01" y="85.38" width="0.73" height="1.45" fill="#d4d4d4"/><rect x="632.47" y="85.38" width="6.57" height="1.45" fill="#d4d4d4"/><rect x="639.77" y="85.38" width="8.03" height="1.45" fill="#d4d4d4"/><rect x="648.53" y="85.38" width="0.73" height="1.45" fill="#d4d4d4"/><rect x="608.38" y="88.30" width="1.46" height="1.45" fill="#c586c0"/><rect x="610.57" y="88.30" width="0.73" height="1.45" fill="#d4d4d4"/><rect x="612.03" y="88.30" width="5.84" height="1.45" fill="#d4d4d4"/><rect x="618.60" y="88.30" width="1.46" height="1.45" fill="#d4d4d4"/><rect x="620.79" y="88.30" width="5.84" height="1.45" fill="#d4d4d4"/><rect x="627.36" y="88.30" width="0.73" height="1.45" fill="#d4d4d4"/><rect x="628.82" y="88.30" width="0.73" height="1.45" fill="#d4d4d4"/><rect x="605.46" y="89.76" width="3.65" height="1.45" fill="#d4d4d4"/><rect x="609.84" y="89.76" width="1.46" height="1.45" fill="#d4d4d4"/><rect x="612.03" y="89.76" width="4.38" height="1.45" fill="#d4d4d4"/></g><g opacity="0.62"><rect x="604.00" y="0.70" width="2.92" height="1.45" fill="#6a9955"/><rect x="607.65" y="0.70" width="2.92" height="1.45" fill="#6a9955"/><rect x="611.30" y="0.70" width="29.20" height="1.45" fill="#6a9955"/><rect x="641.23" y="0.70" width="11.68" height="1.45" fill="#6a9955"/><rect x="604.00" y="2.16" width="2.19" height="1.45" fill="#6a9955"/><rect x="606.92" y="2.16" width="5.84" height="1.45" fill="#6a9955"/><rect x="604.00" y="6.54" width="5.84" height="1.45" fill="#6a9955"/><rect x="604.00" y="10.92" width="1.46" height="1.45" fill="#6a9955"/><rect x="606.19" y="10.92" width="2.92" height="1.45" fill="#6a9955"/><rect x="604.00" y="15.30" width="5.84" height="1.45" fill="#6a9955"/><rect x="604.00" y="19.68" width="2.19" height="1.45" fill="#6a9955"/><rect x="606.92" y="19.68" width="3.65" height="1.45" fill="#6a9955"/><rect x="611.30" y="19.68" width="8.76" height="1.45" fill="#6a9955"/><rect x="620.79" y="19.68" width="5.84" height="1.45" fill="#6a9955"/><rect x="627.36" y="19.68" width="10.22" height="1.45" fill="#6a9955"/><rect x="638.31" y="19.68" width="5.84" height="1.45" fill="#6a9955"/><rect x="644.88" y="19.68" width="8.03" height="1.45" fill="#6a9955"/><rect x="604.00" y="21.14" width="2.92" height="1.45" fill="#6a9955"/><rect x="607.65" y="21.14" width="7.30" height="1.45" fill="#6a9955"/><rect x="615.68" y="21.14" width="6.57" height="1.45" fill="#6a9955"/><rect x="622.98" y="21.14" width="10.22" height="1.45" fill="#6a9955"/><rect x="633.93" y="21.14" width="8.76" height="1.45" fill="#6a9955"/><rect x="643.42" y="21.14" width="9.49" height="1.45" fill="#6a9955"/><rect x="604.00" y="22.60" width="5.11" height="1.45" fill="#6a9955"/><rect x="609.84" y="22.60" width="8.76" height="1.45" fill="#6a9955"/><rect x="619.33" y="22.60" width="14.60" height="1.45" fill="#6a9955"/><rect x="634.66" y="22.60" width="4.38" height="1.45" fill="#6a9955"/><rect x="639.77" y="22.60" width="5.84" height="1.45" fill="#6a9955"/><rect x="604.00" y="25.52" width="5.84" height="1.45" fill="#6a9955"/><rect x="610.57" y="25.52" width="10.22" height="1.45" fill="#6a9955"/><rect x="621.52" y="25.52" width="7.30" height="1.45" fill="#6a9955"/><rect x="604.00" y="28.44" width="7.30" height="1.45" fill="#6a9955"/><rect x="612.03" y="28.44" width="4.38" height="1.45" fill="#6a9955"/><rect x="617.14" y="28.44" width="10.95" height="1.45" fill="#6a9955"/><rect x="628.82" y="28.44" width="5.84" height="1.45" fill="#6a9955"/><rect x="635.39" y="28.44" width="14.60" height="1.45" fill="#6a9955"/><rect x="604.00" y="29.90" width="8.76" height="1.45" fill="#6a9955"/><rect x="613.49" y="29.90" width="6.57" height="1.45" fill="#6a9955"/><rect x="620.79" y="29.90" width="9.49" height="1.45" fill="#6a9955"/><rect x="604.00" y="31.36" width="4.38" height="1.45" fill="#6a9955"/><rect x="609.11" y="31.36" width="8.76" height="1.45" fill="#6a9955"/><rect x="618.60" y="31.36" width="4.38" height="1.45" fill="#6a9955"/><rect x="604.00" y="35.74" width="5.84" height="1.45" fill="#6a9955"/><rect x="610.57" y="35.74" width="8.76" height="1.45" fill="#6a9955"/><rect x="620.06" y="35.74" width="2.92" height="1.45" fill="#6a9955"/><rect x="623.71" y="35.74" width="13.14" height="1.45" fill="#6a9955"/><rect x="637.58" y="35.74" width="7.30" height="1.45" fill="#6a9955"/><rect x="645.61" y="35.74" width="7.30" height="1.45" fill="#6a9955"/><rect x="604.00" y="37.20" width="1.46" height="1.45" fill="#6a9955"/><rect x="605.46" y="120.42" width="2.19" height="1.45" fill="#6a9955"/><rect x="608.38" y="120.42" width="8.76" height="1.45" fill="#6a9955"/><rect x="605.46" y="121.88" width="8.76" height="1.45" fill="#6a9955"/><rect x="605.46" y="129.18" width="5.84" height="1.45" fill="#6a9955"/><rect x="606.19" y="132.10" width="5.84" height="1.45" fill="#6a9955"/><rect x="606.92" y="170.06" width="1.46" height="1.45" fill="#6a9955"/><rect x="621.52" y="181.74" width="7.30" height="1.45" fill="#6a9955"/><rect x="605.46" y="189.04" width="8.76" height="1.45" fill="#6a9955"/><rect x="614.95" y="189.04" width="7.30" height="1.45" fill="#6a9955"/><rect x="606.92" y="194.88" width="7.30" height="1.45" fill="#6a9955"/><rect x="608.38" y="209.48" width="4.38" height="1.45" fill="#6a9955"/><rect x="605.46" y="218.24" width="8.76" height="1.45" fill="#6a9955"/><rect x="605.46" y="222.62" width="7.30" height="1.45" fill="#6a9955"/><rect x="605.46" y="228.46" width="5.84" height="1.45" fill="#6a9955"/><rect x="617.14" y="228.46" width="2.92" height="1.45" fill="#6a9955"/><rect x="606.92" y="235.76" width="4.38" height="1.45" fill="#6a9955"/><rect x="604.00" y="247.44" width="0.73" height="1.45" fill="#6a9955"/><rect x="606.19" y="247.44" width="5.84" height="1.45" fill="#6a9955"/><rect x="620.06" y="247.44" width="7.30" height="1.45" fill="#6a9955"/><rect x="607.65" y="262.04" width="3.65" height="1.45" fill="#6a9955"/><rect x="605.46" y="267.88" width="5.84" height="1.45" fill="#6a9955"/><rect x="611.30" y="279.56" width="1.46" height="1.45" fill="#6a9955"/></g></svg>
<div class="a" style="left:35px;top:0;width:563px;height:4px;background:linear-gradient(#000a,#0000)"></div>
<div class="a" style="left:665px;top:0;width:1px;height:364px;background:#2a2a2a"></div>
<div class="a" style="left:665px;top:59px;width:10px;height:43px;background:#4a4a4a"></div>
<div class="a" style="left:666px;top:74px;width:9px;height:1.2px;background:#8a8a8a"></div>
<div class="a" style="left:668px;top:72.6px;width:4px;height:4px;background:#d8d8d8"></div>
</div>
<svg style="left:344px;top:210px" width="8" height="16" viewBox="0 0 8 16"><g fill="none" stroke-linecap="round"><path d="M1.6 2.2 Q3.5 2.2 3.5 4.2 V12 Q3.5 14 1.6 14 M5.4 2.2 Q3.5 2.2 3.5 4.2 V12 Q3.5 14 5.4 14" stroke="#fff" stroke-width="2.8"/><path d="M1.6 2.2 Q3.5 2.2 3.5 4.2 V12 Q3.5 14 1.6 14 M5.4 2.2 Q3.5 2.2 3.5 4.2 V12 Q3.5 14 5.4 14" stroke="#000" stroke-width="0.9"/></g></svg>
<div class="a" style="left:0;top:452px;width:675px;height:16px;background:#68217a"></div>
<div class="t" style="left:22.90px;top:455.6px;font-size:9.2px;color:#ffffff;transform:scaleX(1.0);transform-origin:0 0">master</div>
<div class="t" style="left:97.86px;top:455.6px;font-size:9.2px;color:#ffffff;transform:scaleX(0.95);transform-origin:0 0">0</div>
<div class="t" style="left:118.06px;top:455.6px;font-size:9.2px;color:#ffffff;transform:scaleX(0.95);transform-origin:0 0">0</div>
<div class="t" style="left:459.98px;top:455.6px;font-size:9.2px;color:#ffffff;transform:scaleX(0.955);transform-origin:0 0">Ln 46, Col 19</div>
<div class="t" style="left:522.63px;top:455.6px;font-size:9.2px;color:#ffffff;transform:scaleX(0.94);transform-origin:0 0">Spaces: 2</div>
<div class="t" style="left:571.23px;top:455.6px;font-size:9.2px;color:#ffffff;transform:scaleX(0.9);transform-origin:0 0">UTF-8</div>
<div class="t" style="left:606.14px;top:455.6px;font-size:9.2px;color:#ffffff;transform:scaleX(0.88);transform-origin:0 0">LF</div>
<div class="t" style="left:626.55px;top:455.6px;font-size:9.2px;color:#ffffff;transform:scaleX(0.9);transform-origin:0 0">C++</div>
<svg style="left:0;top:452px" width="675" height="16"><g fill="none" stroke="#ffffff" stroke-width="0.9"><circle cx="13" cy="3.8" r="1.3"/><circle cx="18.2" cy="6.2" r="1.3"/><circle cx="13" cy="12.2" r="1.3"/><path d="M13 5.1 V10.9 M18 7.5 Q17.5 9.8 13.3 10.6"/><path d="M64.4 7.4 A4.3 4.3 0 0 1 72.6 6.6"/><path d="M72.6 8.6 A4.3 4.3 0 0 1 64.4 9.4"/><path d="M71 5.8 L72.6 7.4 L74 5.6 M62.9 10.4 L64.4 8.6 L66 10.2"/><circle cx="90" cy="8" r="4.2"/><path d="M88.2 6.2 L91.8 9.8 M91.8 6.2 L88.2 9.8"/><path d="M110.2 3.6 L114.4 11.8 H106 Z M110.2 6.4 V9 M110.2 10 V10.8"/><path d="M655.3 10.6 L656.5 9.4 V6.4 A2.7 2.7 0 0 1 661.9 6.4 V9.4 L663.1 10.6 Z M658.2 11.8 H660.2"/></g></svg>
</body></html>
